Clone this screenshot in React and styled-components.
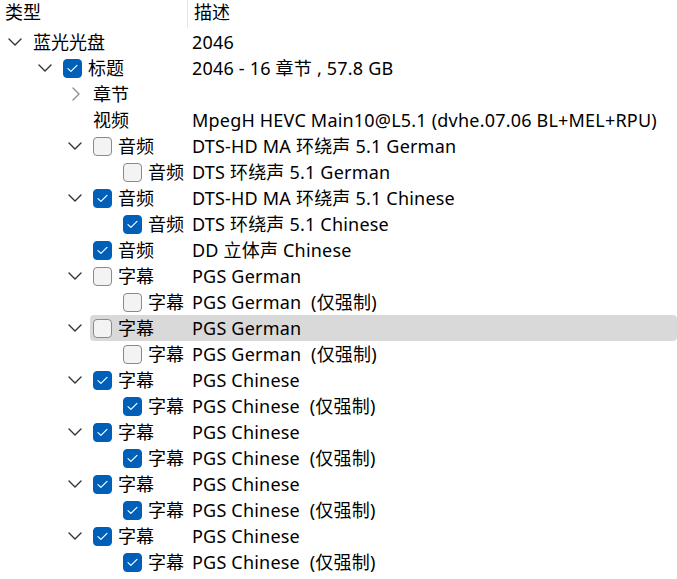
import React from "react";
import styled, { createGlobalStyle } from "styled-components";

const Global = createGlobalStyle`
  html, body { margin: 0; padding: 0; background: #ffffff; }
  body {
    font-family: "Noto Sans", "Noto Sans CJK SC", sans-serif;
    font-size: 18px;
    color: #000000;
    overflow: hidden;
  }
`;

const Tree = styled.div`
  width: 677px;
  height: 579px;
  overflow: hidden;
  background: #ffffff;
`;

const Header = styled.div`
  display: grid;
  grid-template-columns: 187px 1fr;
  height: 29px;
`;

const HeaderCell = styled.div`
  line-height: 24px;
  padding-left: ${p => (p.$first ? 5 : 6)}px;
  border-left: ${p => (p.$first ? "none" : "1px solid #e5e5e5")};
  height: 28px;
  white-space: nowrap;
`;

const Row = styled.div`
  position: relative;
  display: grid;
  grid-template-columns: 187px 1fr;
  height: 26px;
  align-items: center;
  &::before {
    content: "";
    display: ${p => (p.$selected ? "block" : "none")};
    position: absolute;
    top: 0;
    bottom: 0;
    left: ${p => p.$level * 30 + 30}px;
    right: 0;
    background: #d9d9d9;
    border-radius: 4px;
  }
`;

const TypeCell = styled.div`
  position: relative;
  display: flex;
  align-items: center;
  padding-left: ${p => 3 + p.$level * 30}px;
  white-space: nowrap;
  height: 26px;
`;

const Expander = styled.span`
  width: 30px;
  flex: 0 0 30px;
  display: flex;
  align-items: center;
  padding-left: ${p => (p.$dir === "right" ? 9 : 5)}px;
  box-sizing: border-box;
  color: ${p => (p.$dir === "right" ? "#8f8f8f" : "#333333")};
`;

const Box = styled.span`
  width: 19px;
  height: 19px;
  flex: 0 0 19px;
  box-sizing: border-box;
  border-radius: 4px;
  margin-right: 6px;
  display: flex;
  align-items: center;
  justify-content: center;
  background: ${p => (p.$checked ? "#005fb8" : "#f3f3f3")};
  border: 1px solid ${p => (p.$checked ? "#005fb8" : "#8a8a8a")};
`;

const Label = styled.span`
  line-height: 26px;
`;

const DescCell = styled.div`
  position: relative;
  padding-left: 5px;
  white-space: pre;
  line-height: 26px;
  letter-spacing: 0.2px;
`;

const ChevronDown = () => (
  <svg width="14" height="8" viewBox="0 0 14 8" fill="none">
    <path d="M1 1 L7 7 L13 1" stroke="currentColor" strokeWidth="1.4" strokeLinecap="round" strokeLinejoin="round" />
  </svg>
);

const ChevronRight = () => (
  <svg width="8" height="14" viewBox="0 0 8 14" fill="none">
    <path d="M1 1 L7 7 L1 13" stroke="currentColor" strokeWidth="1.4" strokeLinecap="round" strokeLinejoin="round" />
  </svg>
);

const Check = () => (
  <svg width="11" height="9" viewBox="0 0 11 9" fill="none">
    <path d="M1 4.6 L3.9 7.4 L10 1.3" stroke="#ffffff" strokeWidth="1.2" strokeLinecap="round" strokeLinejoin="round" />
  </svg>
);

const rows = [
  { level: 0, exp: "down", type: "蓝光光盘", desc: "2046" },
  { level: 1, exp: "down", cb: true, type: "标题", desc: "2046 - 16 章节 , 57.8 GB" },
  { level: 2, exp: "right", type: "章节", desc: "" },
  { level: 2, type: "视频", desc: "MpegH HEVC Main10@L5.1 (dvhe.07.06 BL+MEL+RPU)" },
  { level: 2, exp: "down", cb: false, type: "音频", desc: "DTS-HD MA 环绕声 5.1 German" },
  { level: 3, cb: false, type: "音频", desc: "DTS 环绕声 5.1 German" },
  { level: 2, exp: "down", cb: true, type: "音频", desc: "DTS-HD MA 环绕声 5.1 Chinese" },
  { level: 3, cb: true, type: "音频", desc: "DTS 环绕声 5.1 Chinese" },
  { level: 2, cb: true, type: "音频", desc: "DD 立体声 Chinese" },
  { level: 2, exp: "down", cb: false, type: "字幕", desc: "PGS German" },
  { level: 3, cb: false, type: "字幕", desc: "PGS German  (仅强制)" },
  { level: 2, exp: "down", cb: false, type: "字幕", desc: "PGS German", selected: true },
  { level: 3, cb: false, type: "字幕", desc: "PGS German  (仅强制)" },
  { level: 2, exp: "down", cb: true, type: "字幕", desc: "PGS Chinese" },
  { level: 3, cb: true, type: "字幕", desc: "PGS Chinese  (仅强制)" },
  { level: 2, exp: "down", cb: true, type: "字幕", desc: "PGS Chinese" },
  { level: 3, cb: true, type: "字幕", desc: "PGS Chinese  (仅强制)" },
  { level: 2, exp: "down", cb: true, type: "字幕", desc: "PGS Chinese" },
  { level: 3, cb: true, type: "字幕", desc: "PGS Chinese  (仅强制)" },
  { level: 2, exp: "down", cb: true, type: "字幕", desc: "PGS Chinese" },
  { level: 3, cb: true, type: "字幕", desc: "PGS Chinese  (仅强制)" },
  { level: 2, exp: "down", cb: false, type: "字幕", desc: "PGS German" },
];

export default function App() {
  return (
    <>
      <Global />
      <Tree>
        <Header>
          <HeaderCell $first>类型</HeaderCell>
          <HeaderCell>描述</HeaderCell>
        </Header>
        {rows.map((r, i) => (
          <Row key={i} $level={r.level} $selected={r.selected}>
            <TypeCell $level={r.level}>
              {r.level < 3 && (
                <Expander $dir={r.exp}>
                  {r.exp === "down" && <ChevronDown />}
                  {r.exp === "right" && <ChevronRight />}
                </Expander>
              )}
              {r.level === 3 && <Expander />}
              {r.cb !== undefined && <Box $checked={r.cb}>{r.cb && <Check />}</Box>}
              <Label>{r.type}</Label>
            </TypeCell>
            <DescCell>{r.desc}</DescCell>
          </Row>
        ))}
      </Tree>
    </>
  );
}
